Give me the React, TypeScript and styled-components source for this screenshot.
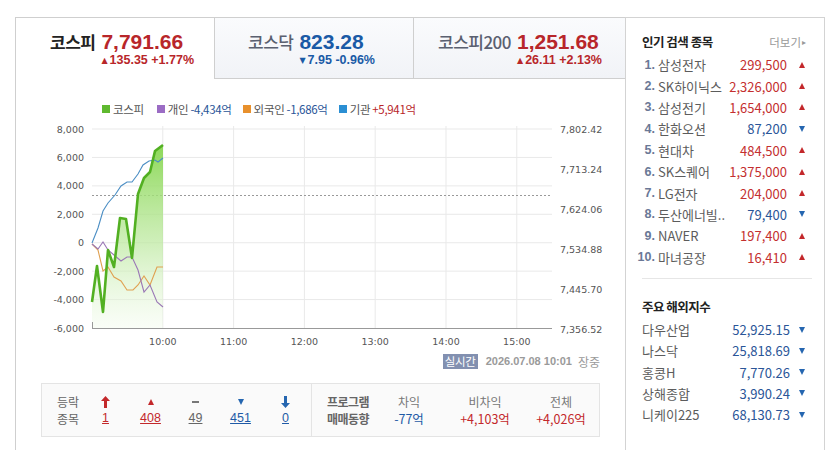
import styled, { createGlobalStyle } from 'styled-components';

const RED = '#c3282b';
const BLUE = '#1f5aa6';
const KR = `'Noto Sans CJK KR', 'Noto Sans', sans-serif`;
const NUM = `'Liberation Sans', 'Noto Sans CJK KR', sans-serif`;

const GlobalStyle = createGlobalStyle`
  html, body { margin: 0; padding: 0; background: #fff; }
  body { font-family: ${KR}; color: #333; overflow: hidden; }
`;

type Dir = 'up' | 'down';

const tabs = [
  { name: '코스피', value: '7,791.66', change: '135.35 +1.77%', dir: 'up' as Dir, active: true, width: 198, pad: 34 },
  { name: '코스닥', value: '823.28', change: '7.95 -0.96%', dir: 'down' as Dir, active: false, width: 199, pad: 33 },
  { name: '코스피200', value: '1,251.68', change: '26.11 +2.13%', dir: 'up' as Dir, active: false, width: 212, pad: 24 },
];

const popular = [
  { name: '삼성전자', price: '299,500', dir: 'up' as Dir },
  { name: 'SK하이닉스', price: '2,326,000', dir: 'up' as Dir },
  { name: '삼성전기', price: '1,654,000', dir: 'up' as Dir },
  { name: '한화오션', price: '87,200', dir: 'down' as Dir },
  { name: '현대차', price: '484,500', dir: 'up' as Dir },
  { name: 'SK스퀘어', price: '1,375,000', dir: 'up' as Dir },
  { name: 'LG전자', price: '204,000', dir: 'up' as Dir },
  { name: '두산에너빌..', price: '79,400', dir: 'down' as Dir },
  { name: 'NAVER', price: '197,400', dir: 'up' as Dir },
  { name: '마녀공장', price: '16,410', dir: 'up' as Dir },
];

const overseas = [
  { name: '다우산업', price: '52,925.15' },
  { name: '나스닥', price: '25,818.69' },
  { name: '홍콩H', price: '7,770.26' },
  { name: '상해종합', price: '3,990.24' },
  { name: '니케이225', price: '68,130.73' },
];

const legend = [
  { color: '#5fb92f', label: '코스피' },
  { color: '#9b6cc4', label: '개인', value: '-4,434억', dir: 'down' as Dir },
  { color: '#e8902c', label: '외국인', value: '-1,686억', dir: 'down' as Dir },
  { color: '#2b8fd3', label: '기관', value: '+5,941억', dir: 'up' as Dir },
];

// chart points in page coordinates
const kospi = [[92, 300], [97, 264], [103, 310], [108, 248], [114, 265], [120, 216], [126, 217], [132, 256], [138, 192], [144, 176], [150, 170], [155, 149], [163, 143]];
const inst = [[92, 241], [98, 226], [103, 209], [108, 201], [115, 193], [121, 184], [127, 180], [132, 180], [138, 172], [143, 163], [149, 159], [155, 158], [158, 160], [163, 156]];
const indiv = [[92, 242], [98, 247], [103, 240], [108, 248], [114, 253], [121, 259], [127, 255], [132, 255], [138, 268], [144, 290], [150, 283], [157, 300], [163, 305]];
const foreign = [[92, 242], [98, 248], [103, 269], [108, 265], [114, 275], [121, 279], [127, 288], [133, 288], [138, 283], [144, 274], [150, 283], [157, 265], [163, 265]];

const leftAxis = ['8,000', '6,000', '4,000', '2,000', '0', '-2,000', '-4,000', '-6,000'];
const rightAxis = ['7,802.42', '7,713.24', '7,624.06', '7,534.88', '7,445.70', '7,356.52'];
const hours = ['10:00', '11:00', '12:00', '13:00', '14:00', '15:00'];

const pts = (a: number[][]) => a.map((p) => p.join(',')).join(' ');

const breadth = [
  { icon: 'upper', value: '1' },
  { icon: 'up', value: '408' },
  { icon: 'flat', value: '49' },
  { icon: 'down', value: '451' },
  { icon: 'lower', value: '0' },
];

const program = [
  { label: '차익', value: '-77억', dir: 'down' as Dir },
  { label: '비차익', value: '+4,103억', dir: 'up' as Dir },
  { label: '전체', value: '+4,026억', dir: 'up' as Dir },
];

const Tri = ({ dir }: { dir: Dir }) => <Triangle $dir={dir} />;

const BreadthIcon = ({ kind }: { kind: string }) => {
  if (kind === 'flat') return <Dash />;
  if (kind === 'up' || kind === 'down') return <Tri dir={kind} />;
  const color = kind === 'upper' ? '#c3282b' : '#2566b0';
  return (
    <svg width="9" height="12" viewBox="0 0 9 12">
      {kind === 'upper' ? (
        <path d="M4.5 0 L9 5 L6 5 L6 12 L3 12 L3 5 L0 5 Z" fill={color} />
      ) : (
        <path d="M4.5 12 L9 7 L6 7 L6 0 L3 0 L3 7 L0 7 Z" fill={color} />
      )}
    </svg>
  );
};

const Chart = () => {
  const area = `${pts(kospi)} 163,326 92,326`;
  return (
    <ChartSvg width={609} height={232} viewBox="0 0 609 232">
      <defs>
        <linearGradient id="kfill" x1="0" y1="0" x2="0" y2="1">
          <stop offset="0%" stopColor="#86d64f" stopOpacity="0.95" />
          <stop offset="55%" stopColor="#bde9a0" stopOpacity="0.7" />
          <stop offset="100%" stopColor="#f2fbec" stopOpacity="0.4" />
        </linearGradient>
      </defs>
      <g transform="translate(-16,-116)">
        {leftAxis.map((l, i) => {
          const y = 127 + i * 28.43;
          return (
            <g key={l}>
              {i < 7 && <line x1={92} x2={552} y1={y} y2={y} stroke="#e9e9e9" />}
              <text x={84} y={y + 3.5} textAnchor="end" fontSize="9.5" fill="#555" fontFamily="DejaVu Sans, sans-serif">{l}</text>
            </g>
          );
        })}
        {hours.map((h, i) => {
          const x = 162.8 + i * 70.8;
          return (
            <g key={h}>
              <line x1={x} x2={x} y1={124} y2={326} stroke="#e9e9e9" />
              <text x={x} y={343} textAnchor="middle" fontSize="9.5" fill="#555" fontFamily="DejaVu Sans, sans-serif">{h}</text>
            </g>
          );
        })}
        {rightAxis.map((l, i) => (
          <text key={l} x={560} y={127 + i * 40 + 3.5} fontSize="9.5" fill="#555" fontFamily="DejaVu Sans, sans-serif">{l}</text>
        ))}
        <line x1={92} x2={552} y1={193.5} y2={193.5} stroke="#999" strokeDasharray="2,2" />
        <polygon points={area} fill="url(#kfill)" />
        <polyline points={pts(foreign)} fill="none" stroke="#e0a050" strokeWidth="1.1" />
        <polyline points={pts(indiv)} fill="none" stroke="#9a78b6" strokeWidth="1.1" />
        <polyline points={pts(inst)} fill="none" stroke="#4b8ec4" strokeWidth="1.1" />
        <polyline points={pts(kospi)} fill="none" stroke="#52b022" strokeWidth="2.6" strokeLinejoin="round" />
        <line x1={92} x2={552} y1={326.5} y2={326.5} stroke="#999" />
        <line x1={92.5} x2={92.5} y1={320} y2={327} stroke="#999" />
      </g>
    </ChartSvg>
  );
};

const App = () => (
  <>
    <GlobalStyle />
    <Page>
      <Main>
        <TabRow>
          {tabs.map((t) => (
            <Tab key={t.name} $active={t.active} $width={t.width} $pad={t.pad}>
              <TabName $active={t.active}>{t.name}</TabName>
              <TabValues>
                <TabValue $dir={t.dir}>{t.value}</TabValue>
                <TabChange $dir={t.dir}>
                  <SmallTri>{t.dir === 'up' ? '▲' : '▼'}</SmallTri>
                  {t.change}
                </TabChange>
              </TabValues>
            </Tab>
          ))}
        </TabRow>

        <Legend>
          {legend.map((l) => (
            <LegendItem key={l.label}>
              <Swatch $color={l.color} />
              <LegendLabel>{l.label}</LegendLabel>
              {l.value && <LegendValue $dir={l.dir!}>{l.value}</LegendValue>}
            </LegendItem>
          ))}
        </Legend>

        <Chart />

        <StatusRow>
          <LiveBadge>실시간</LiveBadge>
          <StatusDate>2026.07.08 10:01</StatusDate>
          <StatusText>장중</StatusText>
        </StatusRow>

        <SummaryBox>
          <BreadthGrid>
            <RowLabel>등락<br />종목</RowLabel>
            {breadth.map((b) => (
              <BreadthCell key={b.icon}>
                <IconSlot><BreadthIcon kind={b.icon} /></IconSlot>
                <BreadthLink $kind={b.icon}>{b.value}</BreadthLink>
              </BreadthCell>
            ))}
          </BreadthGrid>
          <ProgramGrid>
            <ProgramLabel>프로그램<br />매매동향</ProgramLabel>
            {program.map((p) => (
              <ProgramCell key={p.label}>
                <ProgramHead>{p.label}</ProgramHead>
                <ProgramValue $dir={p.dir}>{p.value}</ProgramValue>
              </ProgramCell>
            ))}
          </ProgramGrid>
        </SummaryBox>
      </Main>

      <Sidebar>
        <SideHeader>
          <SideTitle>인기 검색 종목</SideTitle>
          <MoreLink>더보기<MoreArrow>▸</MoreArrow></MoreLink>
        </SideHeader>
        <SideList>
          {popular.map((p, i) => (
            <SideRow key={p.name}>
              <Rank><span>{i + 1}.</span></Rank>
              <StockName>{p.name}</StockName>
              <Price $dir={p.dir}>{p.price}</Price>
              <TriSlot><Tri dir={p.dir} /></TriSlot>
            </SideRow>
          ))}
        </SideList>
        <Divider />
        <SideTitle>주요 해외지수</SideTitle>
        <SideList>
          {overseas.map((o) => (
            <IndexRow key={o.name}>
              <StockName>{o.name}</StockName>
              <Price $dir="down">{o.price}</Price>
              <TriSlot><Tri dir="down" /></TriSlot>
            </IndexRow>
          ))}
        </SideList>
      </Sidebar>
    </Page>
  </>
);

const dirColor = (d: Dir) => (d === 'up' ? RED : BLUE);

const Page = styled.div`
  display: flex;
  align-items: flex-start;
  padding: 17px 0 0 15px;
`;

const Main = styled.div`
  width: 609px;
  height: 433px;
  border-left: 1px solid #cfcfcf;
  display: flex;
  flex-direction: column;
`;

const TabRow = styled.div`
  display: flex;
  height: 62px;
`;

const Tab = styled.div<{ $active: boolean; $width: number; $pad: number }>`
  box-sizing: border-box;
  width: ${(p) => p.$width}px;
  display: flex;
  align-items: flex-start;
  gap: 4px;
  padding: 12px 0 0 ${(p) => p.$pad}px;
  border-top: 1px solid #cfcfcf;
  border-left: ${(p) => (p.$active ? 'none' : '1px solid #cfcfcf')};
  border-bottom: ${(p) => (p.$active ? 'none' : '1px solid #cfcfcf')};
  background: ${(p) => (p.$active ? '#fff' : 'linear-gradient(#fafbfd, #f1f3f7)')};
`;

const TabName = styled.div<{ $active: boolean }>`
  font-family: ${KR};
  font-size: 17px;
  line-height: 24px;
  font-weight: ${(p) => (p.$active ? 700 : 500)};
  color: ${(p) => (p.$active ? '#222' : '#5a6070')};
  letter-spacing: -0.5px;
  margin-right: 2px;
`;

const TabValues = styled.div`
  display: flex;
  flex-direction: column;
`;

const TabValue = styled.div<{ $dir: Dir }>`
  font-family: ${NUM};
  font-size: 21px;
  line-height: 24px;
  font-weight: 700;
  color: ${(p) => (p.$dir === 'up' ? '#b8262a' : '#1a5aa6')};
`;

const TabChange = styled.div<{ $dir: Dir }>`
  font-family: ${NUM};
  font-size: 12.5px;
  line-height: 16px;
  font-weight: 700;
  margin-top: -2px;
  color: ${(p) => (p.$dir === 'up' ? '#b8262a' : '#1a5aa6')};
`;

const SmallTri = styled.span`
  font-family: 'DejaVu Sans', sans-serif;
  font-size: 8px;
  margin-right: 2px;
  vertical-align: 1px;
`;

const Legend = styled.div`
  display: flex;
  gap: 11px;
  margin: 23px 0 0 86px;
  height: 14px;
  align-items: center;
`;

const LegendItem = styled.div`
  display: flex;
  align-items: center;
  font-size: 11.5px;
  line-height: 14px;
  letter-spacing: -0.3px;
`;

const Swatch = styled.span<{ $color: string }>`
  width: 8px;
  height: 8px;
  background: ${(p) => p.$color};
  margin-right: 3px;
`;

const LegendLabel = styled.span`
  color: #555;
  margin-right: 2px;
`;

const LegendValue = styled.span<{ $dir: Dir }>`
  color: ${(p) => (p.$dir === 'up' ? '#b8262a' : '#2a5598')};
`;

const ChartSvg = styled.svg`
  display: block;
  margin-top: 2px;
`;

const StatusRow = styled.div`
  display: flex;
  justify-content: flex-end;
  align-items: center;
  gap: 6px;
  height: 16px;
  margin: 3px 25px 0 0;
`;

const LiveBadge = styled.span`
  background: #8290b0;
  color: #fff;
  font-size: 11.5px;
  line-height: 15px;
  padding: 0 2px;
  letter-spacing: -0.3px;
`;

const StatusDate = styled.span`
  font-family: ${NUM};
  font-size: 11px;
  font-weight: 700;
  color: #9a9a9a;
  margin-left: 2px;
`;

const StatusText = styled.span`
  font-size: 12px;
  color: #9a9a9a;
`;

const SummaryBox = styled.div`
  display: flex;
  margin: 14px 25px 0 25px;
  height: 54px;
  box-sizing: border-box;
  border: 1px solid #e4e4e4;
  background: #fafafa;
`;

const BreadthGrid = styled.div`
  display: grid;
  grid-template-columns: 26px repeat(5, 45px);
  align-items: center;
  padding-left: 15px;
  width: 268px;
  border-right: 1px solid #e4e4e4;
`;

const RowLabel = styled.div`
  font-size: 12px;
  line-height: 17px;
  color: #666;
`;

const BreadthCell = styled.div`
  display: flex;
  flex-direction: column;
  align-items: center;
`;

const IconSlot = styled.div`
  height: 17px;
  display: flex;
  align-items: center;
  justify-content: center;
`;

const BreadthLink = styled.span<{ $kind: string }>`
  font-family: ${NUM};
  font-size: 12.5px;
  line-height: 17px;
  text-decoration: underline;
  color: ${(p) => (p.$kind === 'upper' || p.$kind === 'up' ? RED : p.$kind === 'flat' ? '#666' : BLUE)};
`;

const Dash = styled.span`
  width: 7px;
  height: 2px;
  background: #777;
`;

const Triangle = styled.span<{ $dir: Dir }>`
  display: inline-block;
  width: 0;
  height: 0;
  border-left: 3.5px solid transparent;
  border-right: 3.5px solid transparent;
  ${(p) =>
    p.$dir === 'up'
      ? `border-bottom: 6px solid ${RED};`
      : `border-top: 6px solid #2566b0;`}
`;

const ProgramGrid = styled.div`
  display: grid;
  grid-template-columns: 44px repeat(3, 76px);
  align-items: center;
  padding-left: 15px;
`;

const ProgramLabel = styled.div`
  font-size: 12px;
  line-height: 17px;
  font-weight: 700;
  color: #666;
  letter-spacing: -0.5px;
`;

const ProgramCell = styled.div`
  display: flex;
  flex-direction: column;
  align-items: center;
`;

const ProgramHead = styled.span`
  font-size: 12px;
  line-height: 17px;
  color: #777;
`;

const ProgramValue = styled.span<{ $dir: Dir }>`
  font-size: 12.5px;
  line-height: 17px;
  color: ${(p) => dirColor(p.$dir)};
`;

const Sidebar = styled.div`
  box-sizing: border-box;
  width: 200px;
  height: 433px;
  border: 1px solid #d3d3d3;
  border-bottom: none;
  padding: 15px 14px 0 16px;
`;

const SideHeader = styled.div`
  display: flex;
  justify-content: space-between;
  align-items: center;
  padding-right: 4px;
`;

const SideTitle = styled.div`
  font-size: 12.5px;
  line-height: 18px;
  font-weight: 700;
  color: #222;
  letter-spacing: -0.5px;
`;

const MoreLink = styled.span`
  font-size: 11.5px;
  color: #999;
`;

const MoreArrow = styled.span`
  font-size: 8px;
  margin-left: 1px;
  vertical-align: 2px;
`;

const SideList = styled.div`
  display: flex;
  flex-direction: column;
  margin-top: 3px;
`;

const SideRow = styled.div`
  display: grid;
  grid-template-columns: 13px 1fr auto 20px;
  align-items: center;
  height: 21.4px;
  column-gap: 3px;
`;

const IndexRow = styled.div`
  display: grid;
  grid-template-columns: 1fr auto 20px;
  align-items: center;
  height: 21.3px;
`;

const Rank = styled.span`
  display: flex;
  justify-content: flex-end;
  font-family: ${NUM};
  font-size: 12.5px;
  font-weight: 700;
  color: #6a7896;
  white-space: nowrap;
  min-width: 0;
`;

const StockName = styled.span`
  font-size: 13px;
  color: #5c5c5c;
  white-space: nowrap;
`;

const Price = styled.span<{ $dir: Dir }>`
  font-size: 13px;
  color: ${(p) => (p.$dir === 'up' ? '#c42f2f' : '#2a5598')};
  text-align: right;
`;

const TriSlot = styled.span`
  display: flex;
  justify-content: center;
  padding-left: 4px;
`;

const Divider = styled.div`
  height: 1px;
  background: #e6e6e6;
  margin: 10px -2px 19px 0;
`;

export default App;
